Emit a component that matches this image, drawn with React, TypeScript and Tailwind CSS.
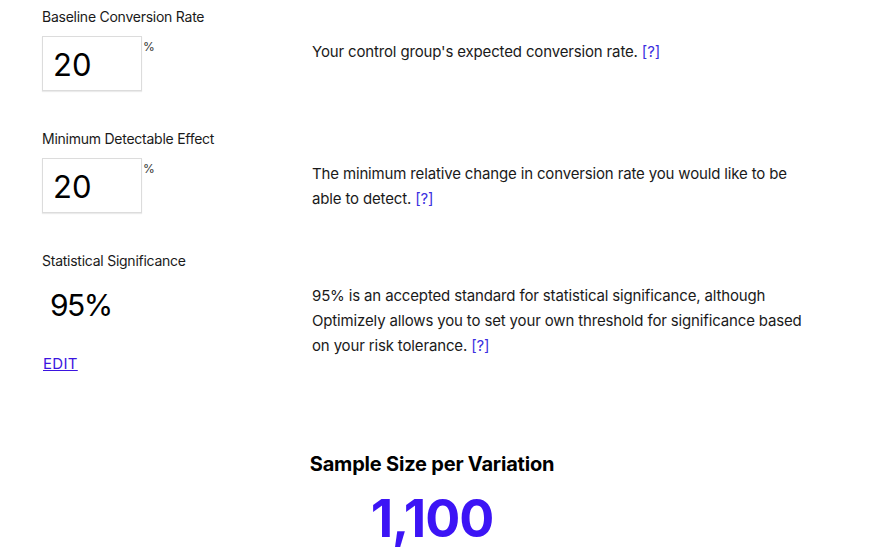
import React from "react";

const font = { fontFamily: "Inter, 'Noto Sans', sans-serif" };

function Help() {
  return (
    <a href="#" className="text-[#3b2ee0]">
      [?]
    </a>
  );
}

function PercentInput({ value }: { value: string }) {
  return (
    <div className="flex items-start mt-[10px]">
      <div className="w-[100px] h-[55px] border border-[#dcdcdc] shadow-[0_1px_1px_rgba(0,0,0,0.08)] bg-white flex items-center pl-[10px] pt-[4px] text-[31px] text-black">
        {value}
      </div>
      <span className="text-[12px] text-[#333] ml-[1px] mt-[2px]">%</span>
    </div>
  );
}

function Row({
  label,
  children,
  text,
}: {
  label: string;
  children: React.ReactNode;
  text: React.ReactNode;
}) {
  return (
    <div className="grid grid-cols-[270px_500px] h-[122px]">
      <div>
        <div className="text-[14px] leading-[18px] tracking-[-0.25px] text-[#1a1a1a]">
          {label}
        </div>
        {children}
      </div>
      <div className="pt-[31px] text-[15px] leading-[25px] tracking-[-0.15px] text-[#1a1a1a]">
        {text}
      </div>
    </div>
  );
}

export default function App() {
  return (
    <main className="w-[873px] h-[560px] bg-white overflow-hidden" style={font}>
      <div className="pl-[42px] pt-[8px] w-[822px]">
        <Row
          label="Baseline Conversion Rate"
          text={
            <p>
              Your control group&apos;s expected conversion rate. <Help />
            </p>
          }
        >
          <PercentInput value="20" />
        </Row>
        <Row
          label="Minimum Detectable Effect"
          text={
            <p>
              The minimum relative change in conversion rate you would like to
              be able to detect. <Help />
            </p>
          }
        >
          <PercentInput value="20" />
        </Row>
        <Row
          label="Statistical Significance"
          text={
            <p>
              95% is an accepted standard for statistical significance, although
              Optimizely allows you to set your own threshold for significance
              based on your risk tolerance. <Help />
            </p>
          }
        >
          <div className="pl-[8px] pt-[17px] text-[30px] leading-[36px] tracking-[-1.5px] text-black">
            95%
          </div>
          <a
            href="#"
            className="inline-block mt-[30px] ml-[1px] text-[15px] tracking-[0.3px] underline text-[#3b14e0]"
          >
            EDIT
          </a>
        </Row>

        <div className="flex flex-col items-center pt-[77px]">
          <h2 className="text-[20px] font-bold text-black leading-[26px] tracking-[-0.2px]">
            Sample Size per Variation
          </h2>
          <div className="text-[52px] font-bold text-[#3c14f5] leading-[60px] mt-[12px] tracking-[-1px]">
            1,100
          </div>
        </div>
      </div>
    </main>
  );
}
